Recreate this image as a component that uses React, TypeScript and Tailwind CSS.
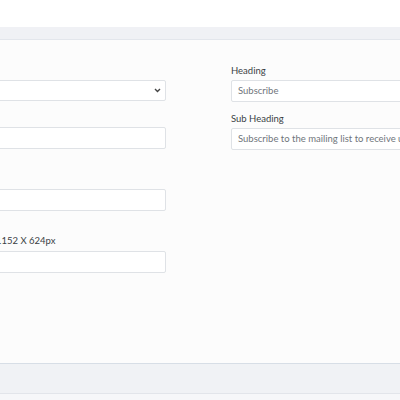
const font = { fontFamily: "Lato, 'Open Sans', sans-serif" };

function Label({ children }: { children?: React.ReactNode }) {
  return <label className="block h-[14px] text-[9.5px] leading-[14px] text-[#3a3f44]">{children}</label>;
}

function Input({ value }: { value?: string }) {
  return (
    <div className="h-[22px] w-full overflow-hidden whitespace-nowrap rounded-[2px] border border-[#dfe2e6] bg-white px-[6px] text-[9.5px] leading-[20px] text-[#6f757b]">
      {value}
    </div>
  );
}

function Select() {
  return (
    <div className="relative h-[21px] w-full rounded-[2px] border border-[#dfe2e6] bg-white">
      <svg className="absolute right-[4px] top-[7px]" width="7" height="5" viewBox="0 0 7 5">
        <path d="M1 1l2.5 2.5L6 1" fill="none" stroke="#444" strokeWidth="1.4" />
      </svg>
    </div>
  );
}

export default function App() {
  return (
    <div className="h-[400px] w-[400px] overflow-hidden bg-white" style={font}>
      <div className="h-[27px]" />
      <div className="box-content h-[12px] border-b border-[#e3e6ec] bg-[#f0f1f5]" />
      <div className="flex h-[323px] gap-[65px] bg-[#fcfcfc] pt-[24px]">
        <div className="-ml-[120px] w-[286px] shrink-0">
          <Label>Layout</Label>
          <div className="mt-[2px]">
            <Select />
          </div>
          <div className="mt-[10px]">
            <Label>Title</Label>
          </div>
          <div className="mt-[2px]">
            <Input />
          </div>
          <div className="mt-[24px]">
            <Label>Button</Label>
          </div>
          <div className="mt-[2px]">
            <Input />
          </div>
          <div className="mt-[23px] flex whitespace-nowrap text-[9.5px] leading-[14px] text-[#3a3f44]">
            <span className="w-[116px] shrink-0 overflow-hidden">Image</span>
            <span>1152 X 624px</span>
          </div>
          <div className="mt-[3px]">
            <Input />
          </div>
        </div>
        <div className="w-[200px] shrink-0">
          <Label>Heading</Label>
          <div className="mt-[2px]">
            <Input value="Subscribe" />
          </div>
          <div className="mt-[10px]">
            <Label>Sub Heading</Label>
          </div>
          <div className="mt-[2px]">
            <Input value="Subscribe to the mailing list to receive updates" />
          </div>
        </div>
      </div>
      <div className="box-content h-[29px] border-t border-b border-t-[#d7dee6] border-b-[#e2e5ea] bg-[#f0f2f5]" />
      <div className="h-[6px] bg-[#f6f7f9]" />
    </div>
  );
}
